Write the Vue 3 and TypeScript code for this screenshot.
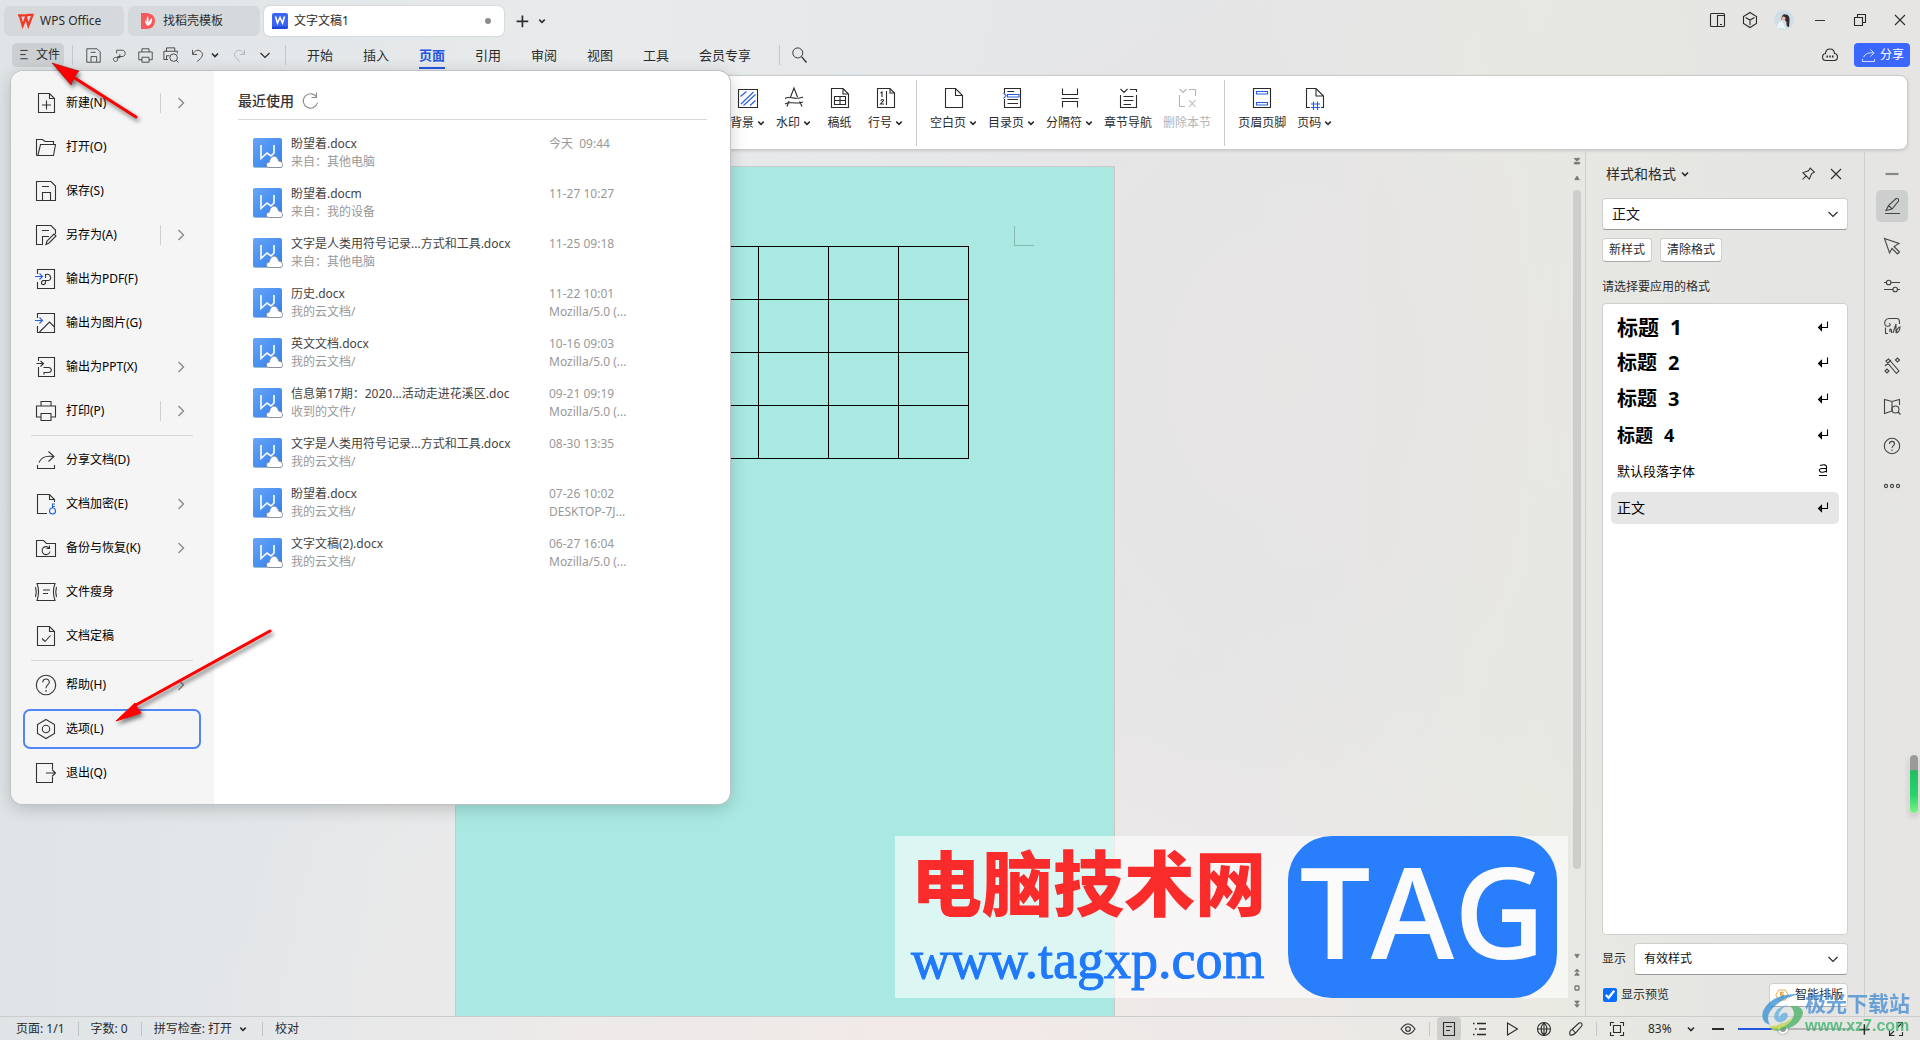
<script setup lang="ts">
import { h, ref } from 'vue'

const icons: Record<string, string> = {
  plus: '<path d="M12.5 5.5v14M5.5 12.5h14" stroke-width="2"/>',
  minus: '<path d="M6 12h12" stroke-width="2"/>',
  down: '<path d="M9 10.5l3 3 3-3" stroke-width="1.6"/>',
  chevron: '<path d="M7.5 10l4.5 4.500 4.500-4.500" stroke-width="1.200"/>',
  right: '<path d="M9.500 7l5 5-5 5" stroke="#8a8a8a" stroke-width="1.400"/>',
  burger: '<path d="M7.500 6.500h9M7.500 11.500h6.500M7.500 16.500h9"/>',
  save: '<path d="M2.500 2.500H17L21.500 7V21.500H2.500ZM8 7.500H15M8.500 21V13.500H16.500V21"/>',
  saveAs: '<path d="M9 21.500H2.500V2.500H17L21.500 7V11M8 7.500H15M8.500 21V13.500H15M12 21.500L13 18l7-7 2 2-7 7-3 1.500Z"/>',
  pdf: '<path d="M8 9V4.500H15.500C21.500 4.500 21.500 13.500 15.500 13.500H9.500V17C9.500 21.500 3.500 21.500 3.500 17.500S8 15 12.500 15V10"/>',
  print: '<path d="M7 7V2.500H17V7M7 18H2.500V7H21.500V18H17M7 14.500H17V21.500H7Z"/>',
  preview: '<path d="M6 7V2.500H17V7M6 18H2.500V7H20.500V10M8 18H6V13H10"/><circle cx="15.500" cy="15.500" r="5"/><path d="M19 19l3 3"/>',
  undo: '<path d="M5 4v6.500h6.500M5.500 10C8 4.500 13.500 3 17 6.500c4 4 2 8-5.500 14"/>',
  redo: '<path d="M19 4v6.500h-6.500M18.500 10C16 4.500 10.500 3 7 6.500c-4 4-2 8 5.500 14"/>',
  search: '<circle cx="10.500" cy="9.500" r="6"/><path d="M15 14l6 7" stroke-width="1.500"/>',
  newDoc: '<path d="M4.500 2.500H15.500L20.500 7.500V21.500H4.500ZM15.500 2.500V7.500H20.500M12.500 9.500V18.500M8 14H17"/>',
  open: '<path d="M2.500 20.500V4.500H8.500L11 6.500H19.500V9M2.500 20.500H19.500L21.500 9.500H6.500L4 20"/>',
  outPdf: '<path d="M3.500 7V2.500H20.500V21.500H3.500V15"/><path d="M1 9.500H8M5.500 6.500L8.500 9.500L5.500 12.500" stroke="#245ee0"/><path d="M11.500 11V7.500C17.500 6 18 13.500 14.500 13.500H9.500C6.500 14 7 18.500 10 17.500C12 17 11.500 14 11.500 13.500"/>',
  outPic: '<path d="M3.500 7V2.500H20.500V21.500H3.500V15M5.500 21L15.500 11L20.500 16"/><path d="M1 9.500H8M5.500 6.500L8.500 9.500L5.500 12.500" stroke="#245ee0"/>',
  outPpt: '<path d="M4.500 6V2.500H20.500V21.500H4.500V12M2.500 8.500H9M6.500 6L9.500 8.500L6.500 11.500M9.500 12.500H14.500C18.500 12.500 18 17.500 14.500 17.500H10V19.500"/>',
  share: '<path d="M3.500 17V20.500H20.500V17M5 14.500C7 9.500 12 7.500 19 8.500M14.500 3.500L20 8.500L14.500 13.500"/>',
  lock: '<path d="M13 21.500H3.500V2.500H15.500L20.500 7.500V10M15.500 2.500V7.500H20.500"/><g stroke="#245ee0"><circle cx="18.500" cy="19" r="3"/><path d="M18.500 16V12H21M18.500 14.500H21"/></g>',
  backup: '<path d="M2.500 20.500V4.500H9.500L12.500 7.500H21.500V20.500ZM15.500 12.500A4 4 0 1 0 16 15.500M15.500 9.500V12.500H12.500"/>',
  slim: '<path d="M3 3.500H21C19 9 19 15 21 20.500H3C5 15 5 9 3 3.500ZM9 10H16M9 13.500H14M1.500 7Q3 12 1.500 17M22.500 7Q21 12 22.500 17"/>',
  final: '<path d="M3.500 2.500H15.500L20.500 7.500V21.500H3.500ZM15.500 2.500V7.500H20.500M8 14.500L11 17.500L16.500 11.500"/>',
  help: '<circle cx="12" cy="12" r="9.700"/><path d="M8.800 9.500C8.800 4.800 15.500 5 15.300 9.200C15.200 11.500 12 12 12 15.200M12 17v2"/>',
  options: '<path d="M12 2.500L20.500 7.500V16.500L12 21.500L3.500 16.500V7.500Z"/><circle cx="12" cy="12" r="3.700"/>',
  exit: '<path d="M18.500 8V2.500H2.500V21.500H18.500V16M12 12H21.500M18 8.500L21.500 12L18 15.500"/>',
  refresh: '<path d="M18.500 8A7.200 7.200 0 1 0 19.500 13.500M18.500 3.500V8.500H13.500"/>',
  background: '<path d="M2.500 3.500H21.500V21.500H2.500Z"/><path d="M4.500 10.500L10.500 5.500M5 18L17.500 6M7.500 19.500L19.500 8.500M14 19.500L19.500 14.500" stroke="#245ee0"/>',
  watermark: '<path d="M5 20.500L7 15M8.500 11L12 2L15.500 11M17.500 15.500L20 20.500M3 12.500C8 9 12 15 21 11M3 18C8 14.500 13 19 21 16"/>',
  grid: '<path d="M3.500 2.500H15L20.500 8V21.500H3.500ZM15 2.500V8H20.500M6.500 10.500H17.500V18.500H6.500ZM12 10.500V18.500M6.500 14.500H17.500"/>',
  lineNo: '<path d="M3.500 2.500H16L20.500 7V21.500H3.500ZM12.500 5V19M16 2.500V7H20.500M6.500 7L8 6V11M6.500 14.500Q9.500 12.500 9.500 14.500L6.500 18H10"/>',
  blank: '<path d="M3.500 2.500H13.500L20.500 9.500V21.500H3.500ZM13.500 2.500V9.500H20.500"/>',
  toc: '<path d="M4.500 7V2.500H20.500V21.500H4.500V13M7.500 5.500H14M7.500 13.500H18M7.500 17.500H18"/><path d="M3.500 7L6 9.500L3.500 12.500M7.500 8.500H19V11H7.500Z" stroke="#245ee0"/>',
  breaks: '<path d="M4.500 2.500V8.500H19.500V2.500M3.500 12.500H20.500M4.500 21.500V15.500H19.500V21.500"/>',
  chapter: '<path d="M4.500 9V21.500H20.500V9M4.500 3L8 6.500L11.500 3M14 3.500H20.500V6M7.500 10.500H17.500M7.500 14.500H17.500M7.500 18.500H15"/>',
  removeSection: '<path d="M4.500 9V20.500H10M4.500 3L8 6.500L11.500 3M14 3.500H20.500V10M14 14L20.500 21M20.500 14L14 21"/>',
  headFoot: '<path d="M3.500 2.500H20.500V21.500H3.500Z"/><path d="M6.500 5.500H17.500V8H6.500ZM6.500 16.500H17.500V19H6.500Z" stroke="#245ee0"/>',
  pageNo: '<path d="M7 21.500H3.500V2.500H13L20.500 10V21.500H18M13 2.500V10H20.500"/><path d="M10.500 15.500V24M14.500 15.500V24M8 18H17M8 21.500H17" stroke="#245ee0"/>',
  panes: '<rect x="4.500" y="5.500" width="14" height="13" rx="1"/><path d="M18.500 7.500H11.500V18M14 16.500h2"/>',
  cube: '<path d="M12 4.500L18.500 8.500V15.500L12 19.500L5.500 15.500V8.500ZM7.500 9.500L12 12L16.500 9.500M12 12V17"/>',
  restore: '<path d="M6.500 9.500H14.500V17.500H6.500ZM9.500 9V6.500H17.500V14.500H15"/>',
  close: '<path d="M7 7L17 17M17 7L7 17"/>',
  cloud: '<path d="M8 17.500C3.500 17.500 3.500 11 7.500 10.500C8 4.500 16 4.500 16.500 10.500C20.500 11 20.500 17.500 16 17.500Z"/><path d="M8.500 13.500h1.500M11.300 13.500h1.500M14 13.500h1.500" stroke-width="1.800"/>',
  pin: '<path d="M6 18L10 14M14.500 5.500L19 10L16 11.500L13.500 17.500L6.500 10.500L12.500 8.500Z"/>',
  pencil: '<path d="M5 19.500H20M6 16.500L8.500 11.500L16 4.500Q19 4 18.500 7L12 15L6 16.500ZM8.500 11.500L12 15"/>',
  pointer: '<path d="M4.500 4.500L19 9.500L14 12.500L19.500 18L17.500 20L12 14.500L9.500 19Z"/>',
  sliders: '<path d="M4 8.500H6.500M11 8.500H20M4 15.500H13M17.500 15.500H20"/><circle cx="8.700" cy="8.500" r="2.300"/><circle cx="15.200" cy="15.500" r="2.300"/>',
  image: '<path d="M8 19.500H5.500V13.500M5.500 12C3 8 6 4.500 9 4.500H17Q19.500 4.500 19.500 8V10M6 12C11 13 11 10 9 9.500M10 18C9 14 12 14 11.500 19M13 19L16 10V19M16 19Q20 18 20 13Q17 14 16 19"/>',
  magic: '<path d="M6 7L8.500 5L19 17L16.500 19.500ZM5 12L11 6M5 17l2-2 2 2-2 2ZM15.500 6l2-2 2 2-2 2Z"/>',
  book: '<path d="M12 17L4.500 19.500V5.500L12 7.500L19.500 5.500V11M12 7.500V17"/><circle cx="15.500" cy="15.500" r="3.500"/><path d="M18 18l2.500 2.500"/>',
  helpSm: '<circle cx="12" cy="12" r="7.700"/><path d="M9.500 10C9.500 6.500 14.500 6.500 14.500 10C14.500 11.500 12 12 12 14M12 15.500v1.500"/>',
  more: '<circle cx="6" cy="12" r="1.600"/><circle cx="12" cy="12" r="1.600"/><circle cx="18" cy="12" r="1.600"/>',
  enter: '<path d="M16.500 6.500V12.500H8"/><path d="M10.500 9.500L7.500 12.500L10.500 15.500Z" fill="#333"/>',
  charStyle: '<path d="M9 6.500Q15.500 4.500 15.500 8V13.500M15.500 9.500H10.500Q8 10 8.500 12Q10 14.500 15.500 12M8 16.500H16"/>',
  pageUp: '<path d="M7.500 6.500H16.500M8 7L12 11L16 7ZM8 12.500H16V15H8Z" fill="#777"/>',
  triUp: '<path d="M8.500 14.500L12 9L15.500 14.500Z" fill="#777"/>',
  triDown: '<path d="M8.500 9.500L12 15L15.500 9.500Z" fill="#777"/>',
  dblUp: '<path d="M8.500 11L12 7.500L15.500 11ZM8.500 17L12 12.500L15.500 17Z" fill="#777"/>',
  dot: '<rect x="9" y="9" width="6" height="6" rx="1" stroke="#777" stroke-width="2"/>',
  dblDown: '<path d="M8.500 7.500L12 12L15.500 7.500ZM8.500 13L12 17L15.500 13Z" fill="#777"/>',
  eye: '<path d="M5 12Q12 2 19 12Q12 22 5 12Z"/><circle cx="12" cy="12" r="2.300"/>',
  docView: '<path d="M6.500 5.500H17.500V18.500H6.500ZM9 9.500H15M9 13.500H13"/>',
  outline: '<path d="M9 6.500H18M11 12H18M9 17.500H18M5 6.500h1.500M7 12h1.500M5 17.500h1.500" stroke-width="1.300"/>',
  play: '<path d="M7.500 6L17.500 12L7.500 18Z"/>',
  globe: '<circle cx="12" cy="12" r="6.500"/><path d="M5.500 12H18.500M12 5.500V18.500M12 5.500Q6 12 12 18.500Q18 12 12 5.500"/>',
  brush: '<path d="M6 18Q5 14 8 12.500L15 6Q18.500 5 18 8.500L11.500 16Q9 18.500 6 18ZM8.500 12.500L11.500 16"/>',
  fit: '<path d="M5.500 9V5.500H9M15 5.500H18.500V9M18.500 15V18.500H15M9 18.500H5.500V15M8.500 8.500H15.500V15.500H8.500Z"/>',
  expand: '<path d="M13.500 5.500H18.500V10.500M18 6L14 10M10.500 18.500H5.500V13.500M6 18L10 14M18.500 15V18.500H15"/>',
  smart: '<path d="M8 6H16L19.500 12L16 18H8L4.500 12Z" stroke="#e6a23c"/><path d="M14 9H10.500V12H13.500V15H10" stroke="#e6a23c" stroke-width="1.800"/>',
}

const Icon = (p: { name: string; size?: number }) =>
  h('svg', {
    width: p.size ?? 24,
    height: p.size ?? 24,
    viewBox: '0 0 24 24',
    fill: 'none',
    stroke: 'currentColor',
    'stroke-width': 1.1,
    'aria-hidden': 'true',
    innerHTML: icons[p.name],
  })

const tabs = ['开始', '插入', '页面', '引用', '审阅', '视图', '工具', '会员专享']

interface Tool { icon: string; label: string; drop?: boolean; off?: boolean }
const ribbon: Tool[][] = [
  [
    { icon: 'background', label: '背景', drop: true },
    { icon: 'watermark', label: '水印', drop: true },
    { icon: 'grid', label: '稿纸' },
    { icon: 'lineNo', label: '行号', drop: true },
  ],
  [
    { icon: 'blank', label: '空白页', drop: true },
    { icon: 'toc', label: '目录页', drop: true },
    { icon: 'breaks', label: '分隔符', drop: true },
    { icon: 'chapter', label: '章节导航' },
    { icon: 'removeSection', label: '删除本节', off: true },
  ],
  [
    { icon: 'headFoot', label: '页眉页脚' },
    { icon: 'pageNo', label: '页码', drop: true },
  ],
]

interface Entry { icon: string; label: string; more?: boolean; split?: boolean; active?: boolean }
const menu: Entry[][] = [
  [
    { icon: 'newDoc', label: '新建(N)', more: true, split: true },
    { icon: 'open', label: '打开(O)' },
    { icon: 'save', label: '保存(S)' },
    { icon: 'saveAs', label: '另存为(A)', more: true, split: true },
    { icon: 'outPdf', label: '输出为PDF(F)' },
    { icon: 'outPic', label: '输出为图片(G)' },
    { icon: 'outPpt', label: '输出为PPT(X)', more: true },
    { icon: 'print', label: '打印(P)', more: true, split: true },
  ],
  [
    { icon: 'share', label: '分享文档(D)' },
    { icon: 'lock', label: '文档加密(E)', more: true },
    { icon: 'backup', label: '备份与恢复(K)', more: true },
    { icon: 'slim', label: '文件瘦身' },
    { icon: 'final', label: '文档定稿' },
  ],
  [
    { icon: 'help', label: '帮助(H)', more: true },
    { icon: 'options', label: '选项(L)', active: true },
    { icon: 'exit', label: '退出(Q)' },
  ],
]

const files = [
  { name: '盼望着.docx', from: '来自：其他电脑', time: '今天  09:44', device: '' },
  { name: '盼望着.docm', from: '来自：我的设备', time: '11-27 10:27', device: '' },
  { name: '文字是人类用符号记录...方式和工具.docx', from: '来自：其他电脑', time: '11-25 09:18', device: '' },
  { name: '历史.docx', from: '我的云文档/', time: '11-22 10:01', device: 'Mozilla/5.0 (...' },
  { name: '英文文档.docx', from: '我的云文档/', time: '10-16 09:03', device: 'Mozilla/5.0 (...' },
  { name: '信息第17期：2020...活动走进花溪区.doc', from: '收到的文件/', time: '09-21 09:19', device: 'Mozilla/5.0 (...' },
  { name: '文字是人类用符号记录...方式和工具.docx', from: '我的云文档/', time: '08-30 13:35', device: '' },
  { name: '盼望着.docx', from: '我的云文档/', time: '07-26 10:02', device: 'DESKTOP-7J...' },
  { name: '文字文稿(2).docx', from: '我的云文档/', time: '06-27 16:04', device: 'Mozilla/5.0 (...' },
]

const styles = [
  { label: '标题', level: '1', cls: 's1', icon: 'enter' },
  { label: '标题', level: '2', cls: 's2', icon: 'enter' },
  { label: '标题', level: '3', cls: 's3', icon: 'enter' },
  { label: '标题', level: '4', cls: 's4', icon: 'enter' },
  { label: '默认段落字体', level: '', cls: 's5', icon: 'charStyle' },
  { label: '正文', level: '', cls: 's6', icon: 'enter' },
]

const sideTools = ['pencil', 'pointer', 'sliders', 'image', 'magic', 'book', 'helpSm', 'more']
const preview = ref(true)
const zoom = ref(38)
</script>

<template>
  <div class="app">
    <header class="titlebar">
      <button class="tab t1">
        <svg width="17" height="16" viewBox="0 0 18 16" fill="none" stroke="#f23a26" stroke-width="2.400"><path d="M1 2H12M3 2L6 13L9.500 4L12 13L16.500 1.500H11"/></svg>
        <span>WPS Office</span>
      </button>
      <button class="tab t2">
        <svg width="14" height="16" viewBox="0 0 14 16"><path d="M0 0H6Q14 1 14 8T6 16H0Z" fill="#f4595b"/><path d="M4 7Q4 11 7 13Q12 10 11 5Q8 7 7.500 10Q8 6 7 3Q5 5 6 9Z" fill="#fff"/></svg>
        <span>找稻壳模板</span>
      </button>
      <button class="tab t3">
        <svg width="16" height="16" viewBox="0 0 16 16"><rect width="16" height="16" rx="2" fill="#3b66f5"/><path d="M0 13.500H16V14Q16 16 14 16H0Z" fill="#1c46d8"/><path d="M3.500 3.500L5.500 10L8 4.500L10.500 10L12.500 3.500" fill="none" stroke="#fff" stroke-width="1.600"/></svg>
        <span>文字文稿1</span><i class="dot"></i>
      </button>
      <button class="ib w24" aria-label="新建标签"><Icon name="plus" :size="20" /></button>
      <button class="ib w16" aria-label="标签列表"><Icon name="down" :size="22" /></button>
      <span class="grow"></span>
      <div class="winbtns">
        <button class="ib" aria-label="窗格"><Icon name="panes" /></button>
        <button class="ib cube" aria-label="应用"><Icon name="cube" /></button>
        <button class="ib avatar" aria-label="账号">
          <svg width="20" height="20" viewBox="0 0 20 20"><circle cx="10" cy="10" r="10" fill="#cfdde6"/><path d="M3 18Q3 12 8 11L12 19Z" fill="#eaf5f8"/><path d="M7 10Q8 3 12 4.500Q16 5 15.500 11L15 17Q12 17 12.500 12L9 8Z" fill="#35282f"/><circle cx="9.500" cy="8.500" r="2" fill="#e9b9a8"/></svg>
        </button>
        <button class="ib w40" aria-label="最小化"><svg width="12" height="12" viewBox="0 0 12 12"><path d="M1 6.500H11" stroke="#333"/></svg></button>
        <button class="ib w40" aria-label="还原"><Icon name="restore" /></button>
        <button class="ib w40" aria-label="关闭"><Icon name="close" /></button>
      </div>
    </header>

    <nav class="menubar">
      <button class="file"><Icon name="burger" :size="20" /><span>文件</span></button>
      <i class="vsep"></i>
      <div class="quick">
        <button class="ib" aria-label="保存"><Icon name="save" :size="17" /></button>
        <button class="ib" aria-label="输出PDF"><Icon name="pdf" :size="17" /></button>
        <button class="ib" aria-label="打印"><Icon name="print" :size="17" /></button>
        <button class="ib" aria-label="预览"><Icon name="preview" :size="18" /></button>
        <button class="ib" aria-label="撤销"><Icon name="undo" :size="17" /></button>
        <button class="ib w16" aria-label="撤销列表"><Icon name="down" /></button>
        <button class="ib faint redo" aria-label="恢复"><Icon name="redo" :size="17" /></button>
        <button class="ib" aria-label="更多"><Icon name="chevron" /></button>
      </div>
      <i class="vsep"></i>
      <div class="tabs">
        <button v-for="t in tabs" :key="t" :class="{ on: t === '页面' }">{{ t }}</button>
      </div>
      <i class="vsep s2nd"></i>
      <button class="ib find" aria-label="搜索"><Icon name="search" :size="20" /></button>
      <span class="grow"></span>
      <button class="ib cloudb" aria-label="云同步"><Icon name="cloud" /></button>
      <button class="sharebtn"><Icon name="share" :size="17" /><span>分享</span></button>
    </nav>

    <section class="ribbon">
      <div v-for="(g, i) in ribbon" :key="i" class="group">
        <button v-for="t in g" :key="t.label" class="tool" :class="{ off: t.off }" :disabled="t.off">
          <Icon :name="t.icon" />
          <span class="lab">{{ t.label }}<Icon v-if="t.drop" name="down" class="dd" :size="22" /></span>
        </button>
      </div>
    </section>

    <div class="main">
      <main class="canvas">
        <div class="page">
          <i class="corner"></i>
          <table class="grid" aria-label="表格">
            <tbody><tr v-for="r in 4" :key="r"><td v-for="c in 6" :key="c"></td></tr></tbody>
          </table>
        </div>
      </main>
      <div class="scroll">
        <Icon name="pageUp" :size="16" /><Icon name="triUp" :size="18" />
        <div class="track"><div class="thumb"></div></div>
        <Icon name="triDown" :size="18" /><Icon name="dblUp" :size="18" /><Icon name="dot" :size="18" /><Icon name="dblDown" :size="18" />
      </div>

      <aside class="styles">
        <div class="shead">
          <button class="stitle">样式和格式<Icon name="down" /></button>
          <span class="grow"></span>
          <button class="ib" aria-label="固定"><Icon name="pin" :size="22" /></button>
          <button class="ib" aria-label="关闭窗格"><Icon name="close" /></button>
        </div>
        <div class="sel big">
          <select aria-label="当前样式"><option>正文</option></select><Icon name="chevron" />
        </div>
        <div class="btns"><button class="sm">新样式</button><button class="sm">清除格式</button></div>
        <p class="hint">请选择要应用的格式</p>
        <div class="list">
          <button v-for="s in styles" :key="s.cls" class="sitem" :class="s.cls">
            <span>{{ s.label }}</span><span v-if="s.level">{{ s.level }}</span><Icon :name="s.icon" />
          </button>
        </div>
        <div class="showrow">
          <label for="show">显示</label>
          <div class="sel"><select id="show"><option>有效样式</option></select><Icon name="chevron" /></div>
        </div>
        <div class="prevrow">
          <label><input v-model="preview" type="checkbox" />显示预览</label>
          <button class="sm smart"><Icon name="smart" :size="20" />智能排版</button>
        </div>
      </aside>

      <aside class="rail">
        <button class="collapse" aria-label="收起"><Icon name="minus" :size="26" /></button>
        <button v-for="(s, i) in sideTools" :key="s" :class="{ on: i === 0 }" :aria-label="s"><Icon :name="s" /></button>
      </aside>
    </div>

    <footer class="status">
      <span class="seg">页面: 1/1</span><span class="seg">字数: 0</span>
      <span class="seg">拼写检查: 打开<Icon name="down" :size="22" class="sd" /></span><span class="seg last">校对</span>
      <span class="grow"></span>
      <div class="views">
        <button class="ib eyeb" aria-label="护眼"><Icon name="eye" /></button>
        <i class="vsep"></i>
        <button class="ib on" aria-label="页面视图"><Icon name="docView" /></button>
        <button class="ib" aria-label="大纲"><Icon name="outline" /></button>
        <button class="ib" aria-label="阅读"><Icon name="play" /></button>
        <button class="ib" aria-label="Web版式"><Icon name="globe" /></button>
        <button class="ib" aria-label="写作"><Icon name="brush" /></button>
        <i class="vsep"></i>
      </div>
      <button class="ib fitb" aria-label="适应"><Icon name="fit" /></button>
      <span class="pct">83%</span>
      <button class="ib" aria-label="缩放列表"><Icon name="down" /></button>
      <button class="ib zo" aria-label="缩小"><Icon name="minus" /></button>
      <input v-model="zoom" class="range" type="range" min="0" max="100" aria-label="缩放" />
      <button class="ib zi" aria-label="放大"><Icon name="plus" :size="18" /></button>
      <button class="ib ex" aria-label="全屏"><Icon name="expand" /></button>
    </footer>

    <div class="popup">
      <nav class="side">
        <div v-for="(g, i) in menu" :key="i" class="mgroup">
          <button v-for="m in g" :key="m.label" class="mitem" :class="{ active: m.active }">
            <Icon :name="m.icon" /><span class="ml">{{ m.label }}</span>
            <i v-if="m.split" class="msep"></i><Icon v-if="m.more" name="right" class="mr" />
          </button>
        </div>
      </nav>
      <section class="recent">
        <h2>最近使用<Icon name="refresh" class="rf" /></h2>
        <ul>
          <li v-for="(f, i) in files" :key="i">
            <svg class="doc" width="30" height="30" viewBox="0 0 30 30">
              <defs><linearGradient :id="'g' + i" x2="1" y2="1"><stop stop-color="#68a4f6"/><stop offset="1" stop-color="#2f7fec"/></linearGradient></defs>
              <rect x="0" y="1" width="29" height="29" rx="2" fill="#9db6d8"/>
              <rect width="29" height="29" rx="2" :fill="'url(#g' + i + ')'"/>
              <path d="M8 7V20.500L14 15L18 18L21 15V7" fill="none" stroke="#fff" stroke-width="1.600"/>
              <path d="M16 29.500C12.500 29.500 12.500 24.500 16.500 24C17.500 16 25 17 25.500 23C31 23.500 30.500 29.500 27 29.500Z" fill="#fff" stroke="#8a949e"/>
            </svg>
            <div class="nm"><b>{{ f.name }}</b><span>{{ f.from }}</span></div>
            <div class="tm"><span>{{ f.time }}</span><span>{{ f.device }}</span></div>
          </li>
        </ul>
      </section>
    </div>

    <svg class="arrow a1" width="110" height="80" viewBox="0 0 110 80"><path d="M30 25L96 67" stroke="#f00" stroke-width="3" stroke-linecap="round"/><path d="M12 13L39 21L34 27L31 35Z" fill="#f00" stroke="#900" stroke-width=".5"/></svg>
    <svg class="arrow a2" width="180" height="110" viewBox="0 0 180 110"><path d="M34 86L170 11" stroke="#f00" stroke-width="3" stroke-linecap="round"/><path d="M16 101L35 83L37 87L41 93Z" fill="#f00" stroke="#f00" stroke-width="1"/></svg>

    <div class="banner">
      <div class="bt"><strong>电脑技术网</strong><span>www.tagxp.com</span></div>
      <div class="tag">TAG</div>
    </div>

    <div class="site">
      <svg width="44" height="40" viewBox="0 0 44 40">
        <path d="M40 1Q10 0 2 18Q-1 29 9 32Q3 22 15 12Q24 4 40 1Z" fill="#3d94d6"/>
        <path d="M29 13Q42 12 42 20Q38 37 12 38Q33 31 33 20Q32 15 29 13Z" fill="#4db36a"/>
        <path d="M12 38Q28 34 32 24Q20 34 8 33Z" fill="#bfd84a"/>
        <path d="M27 12Q14 14 13 24Q14 30 21 29Q29 26 26 20Q20 19 18 25Q16 18 27 12Z" fill="#68b2e2"/>
      </svg>
      <div class="sitet"><strong>极光下载站</strong><span>www.xz7.com</span></div>
    </div>
    <div class="meter"></div>
  </div>
</template>

<style>
body { margin: 0; }
</style>

<style scoped>
* { box-sizing: border-box; }
.app {
  position: relative; display: flex; flex-direction: column; height: 100vh; overflow: hidden;
  font: 12px/18px "Noto Sans", "Noto Sans CJK SC", sans-serif; color: #2b2b2b;
  background:
    radial-gradient(ellipse 26% 60% at 67% 36%, #e8e5e5 0%, transparent 100%),
    radial-gradient(ellipse 40% 45% at 50% 100%, #f2eae7 0%, transparent 100%),
    linear-gradient(90deg, #dfe4e7 0%, #e8eaeb 30%, #e3e6e9 62%, #e7e9e1 80%, #e5e5e4 93%, #e6e5e3 100%);
}
button { font: inherit; color: inherit; border: 0; background: none; padding: 0; margin: 0; }
svg { flex: none; display: block; }
i { flex: none; display: block; }
.grow { flex: 1; }
.ib { display: flex; align-items: center; justify-content: center; width: 24px; height: 24px; flex: none; }
.w16 { width: 16px; }
.w40 { width: 40px; }
.vsep { width: 1px; height: 20px; background: #c5c8ca; }

.titlebar { display: flex; align-items: center; height: 40px; padding: 2px 0 0 4px; }
.tab { display: flex; align-items: center; gap: 8px; height: 30px; border-radius: 6px; background: #d6d9dc; padding: 0 13px; margin-right: 4px; }
.t1 { width: 120px; gap: 6px; }
.t2 { width: 132px; }
.t3 { width: 240px; background: #fff; padding: 0 13px 0 8px; gap: 6px; box-shadow: 0 0 2px #b5b8ba; margin-right: 6px; }
.dot { width: 6px; height: 6px; border-radius: 50%; background: #8c8c8c; margin-left: auto; }
.winbtns { display: flex; align-items: center; height: 34px; margin-bottom: 2px; }
.winbtns .cube { margin: 0 12px 0 8px; }
.winbtns .avatar { margin-right: 6px; width: 20px; }

.menubar { display: flex; align-items: center; height: 35px; padding: 0 10px 5px 12px; font-size: 13px; }
.file { display: flex; align-items: center; gap: 2px; width: 52px; height: 24px; border-radius: 5px; background: #ccd0d3; padding-left: 2px; margin-right: 8px; font-size: 12px; }
.quick { display: flex; width: 212px; padding-left: 8px; gap: 2px; }
.quick .w16 { margin-left: -4px; }
.quick .redo { margin-left: 2px; }
.faint { color: #a9adb0; }
.tabs { display: flex; gap: 30px; margin-left: 21px; }
.tabs button { height: 28px; border-bottom: 2px solid transparent; padding-top: 2px; }
.tabs .on { color: #2456e0; font-weight: 700; border-color: #2456e0; }
.s2nd { margin-left: 28px; }
.find { margin-left: 7px; }
.cloudb { margin-right: 12px; }
.sharebtn { display: flex; align-items: center; justify-content: center; gap: 3px; width: 56px; height: 24px; border-radius: 4px; background: #3b66ff; color: #fff; font-size: 12px; }

.ribbon { display: flex; align-items: center; height: 75px; margin: 0 12px; padding-left: 717px; background: #fff; border: 1px solid #c9cbcc; border-radius: 8px; box-shadow: 0 1px 3px #0002; }
.group { display: flex; gap: 11px; height: 66px; padding: 6px 13px 0 0; }
.group + .group { border-left: 1px solid #ccc; padding-left: 13px; }
.tool { display: flex; flex-direction: column; align-items: center; gap: 4px; min-width: 35px; height: 48px; }
.tool.off { color: #b5b5b5; }
.lab { display: flex; align-items: center; height: 18px; white-space: nowrap; }
.dd { margin: 0 -7px 0 -4px; }

.main { display: flex; flex: 1; min-height: 0; }
.canvas { flex: 1; min-width: 0; display: flex; justify-content: center; padding-top: 16px; }
.page { position: relative; width: 660px; background: #a9e9e2; border: 1px solid #cdc8c8; border-bottom: 0; padding: 79px 0 0 92px; }
.grid { border-collapse: collapse; }
.grid td { width: 70px; height: 53px; border: 1px solid #000; padding: 0; }
.corner { position: absolute; top: 59px; right: 80px; width: 20px; height: 20px; border: solid #86b9b4; border-width: 0 0 1px 1px; }
.scroll { display: flex; flex-direction: column; align-items: center; width: 16px; padding: 4px 0; color: #777; }
.scroll svg { width: 16px; height: 16px; overflow: visible; }
.track { flex: 1; margin: 4px 0; }
.thumb { width: 8px; height: 90%; border-radius: 4px; background: #cdcecb; }

.styles { display: flex; flex-direction: column; width: 280px; padding: 0 16px 9px 16px; border: solid #cfd0ce; border-width: 0 1px; }
.shead { display: flex; align-items: center; height: 48px; flex: none; }
.shead .ib { margin-left: 4px; margin-right: 0; }
.stitle { display: flex; align-items: center; font-size: 14px; margin-left: 4px; }
.stitle svg { margin-left: -3px; }
.sel { display: grid; flex: 1; height: 32px; background: #fff; border: 1px solid #cfcfcd; border-bottom-color: #999; border-radius: 4px; }
.sel.big { flex: none; }
.sel > * { grid-area: 1 / 1; }
.sel select { appearance: none; border: 0; background: none; padding: 0 9px; font: inherit; font-size: 12px; color: #111; }
.sel.big select { font-size: 14px; }
.sel svg { justify-self: end; align-self: center; margin-right: 2px; pointer-events: none; }
.btns { display: flex; gap: 8px; margin-top: 8px; }
.sm { height: 24px; padding: 0 6px; background: #fff; border: 1px solid #cfcfcd; border-bottom-color: #aaa; border-radius: 4px; line-height: 20px; }
.hint { margin: 16px 0 7px; }
.list { flex: 1; display: flex; flex-direction: column; gap: 4px; padding: 8px; background: #fff; border: 1px solid #cfcfcd; border-radius: 4px; margin-bottom: 8px; }
.sitem { display: flex; align-items: center; gap: 11px; height: 32px; padding: 0 4px 2px 6px; border-radius: 5px; color: #000; }
.sitem svg { margin-left: auto; }
.s1, .s2, .s3, .s4 { font-weight: 700; font-size: 20px; }
.s1 { font-size: 21px; }
.s4 { font-size: 18px; }
.s5 { font-size: 13px; }
.s6 { font-size: 14px; background: #e6e6e6; padding-bottom: 0; }
.showrow { display: flex; align-items: center; gap: 8px; }
.prevrow { display: flex; align-items: center; justify-content: space-between; margin-top: 8px; }
.prevrow label { display: flex; align-items: center; gap: 4px; }
.prevrow input { width: 14px; height: 14px; margin: 0 0 0 1px; accent-color: #0a6cff; }
.smart { display: flex; align-items: center; gap: 3px; padding: 0 4px 0 2px; }

.rail { display: flex; flex-direction: column; align-items: center; gap: 8px; width: 55px; padding: 16px 2px 0 0; color: #444; }
.rail button { display: flex; align-items: center; justify-content: center; width: 32px; height: 32px; border-radius: 5px; flex: none; }
.rail .collapse { height: 16px; color: #888; }
.rail .on { background: #cdcfce; }

.status { display: flex; align-items: center; height: 24px; border-top: 1px solid #cbcccc; padding-left: 16px; flex: none; }
.seg { display: flex; align-items: center; height: 14px; padding-right: 13px; margin-right: 12px; border-right: 1px solid #c0c3c5; }
.seg.last { border: 0; }
.sd { margin: 0 -5px 0 0; }
.status .vsep { height: 14px; }
.views { display: flex; align-items: center; gap: 8px; }
.views .on { background: #cfd0cc; border-radius: 4px; margin-right: -1px; margin-left: -1px; }
.views .eyeb { margin-right: 1px; }
.fitb { margin: 0 19px 0 8px; }
.pct { width: 31px; }
.zo { margin: 0 8px 0 3px; }
.range { appearance: none; width: 114px; height: 2px; margin: 0; background: linear-gradient(90deg, #2456e0 38%, #b4b6b3 38%); }
.range::-webkit-slider-thumb { appearance: none; width: 10px; height: 10px; border-radius: 50%; background: #999; border: 2px solid #fff; box-shadow: 0 0 2px #777; }
.ex { margin: 0 12px 0 8px; }

.popup { position: absolute; left: 11px; top: 71px; display: flex; width: 719px; height: 733px; overflow: hidden; background: #fff; border-radius: 12px; box-shadow: 0 0 0 1px #bfc3c6, 0 4px 18px #0003; }
.side { width: 203px; padding: 10px 13px 0 12px; background: #f5f5f5; color: #000; }
.side svg { color: #333; }
.mgroup + .mgroup { margin-top: 2px; padding-top: 2px; border-top: 1px solid #d6d6d6; }
.mgroup { margin: 0 8px; }
.mitem { display: flex; align-items: center; width: 178px; height: 40px; margin: 2px -8px 4px; padding: 0 6px 0 9px; border: 2px solid transparent; border-radius: 7px; text-align: left; }
.mitem.active { border-color: #5186f6; }
.ml { flex: 1; padding-left: 8px; }
.msep { width: 1px; height: 20px; background: #d0d0d0; margin-right: 8px; }
.recent { flex: 1; padding: 0 23px 0 24px; }
.recent h2 { display: flex; align-items: center; height: 49px; margin: 0 0 8px; padding-top: 12px; border-bottom: 1px solid #d8d8d8; font-size: 14px; font-weight: 500; color: #333; }
.rf { color: #8a8a8a; margin-left: 4px; }
.recent ul { list-style: none; margin: 0; padding: 0 0 0 15px; }
.recent li { display: flex; align-items: center; height: 50px; }
.nm, .tm { display: flex; flex-direction: column; height: 36px; color: #999; white-space: pre; }
.nm { width: 258px; margin-left: 8px; }
.nm b { font-weight: 400; color: #444; }

.arrow { position: absolute; fill: none; filter: drop-shadow(2px 3px 2px #0008); }
.a1 { left: 40px; top: 50px; }
.a2 { left: 100px; top: 620px; }
.banner { position: absolute; right: 352px; bottom: 42px; display: flex; justify-content: space-between; width: 673px; height: 162px; padding: 0 11px 0 16px; background: #fff9; }
.bt { display: flex; flex-direction: column; }
.bt strong { font: 900 71px/86px "Noto Sans CJK SC", sans-serif; color: #f92b2b; }
.bt span { font: 54px/76px "Liberation Serif", serif; color: #2079fb; -webkit-text-stroke: 1px #2079fb; }
.tag { width: 269px; border-radius: 44px; background: #297efc; color: #fbfbfb; text-align: center; font: 600 126px/148px "Open Sans", sans-serif; }
.site { position: absolute; right: 10px; bottom: 4px; display: flex; align-items: center; opacity: .8; }
.sitet { display: flex; flex-direction: column; }
.sitet strong { font-size: 21px; line-height: 26px; color: #4a90d4; }
.sitet span { font: 700 16px/20px "Liberation Sans", sans-serif; color: #3fb56c; }
.meter { position: absolute; right: 2px; top: 755px; width: 8px; height: 58px; border-radius: 4px; background: linear-gradient(#9a9a98 26%, #1fbf62 27%, #2bd36c 70%, #7af582); box-shadow: 0 0 2px #fff, 0 3px 6px #0003; }
</style>
